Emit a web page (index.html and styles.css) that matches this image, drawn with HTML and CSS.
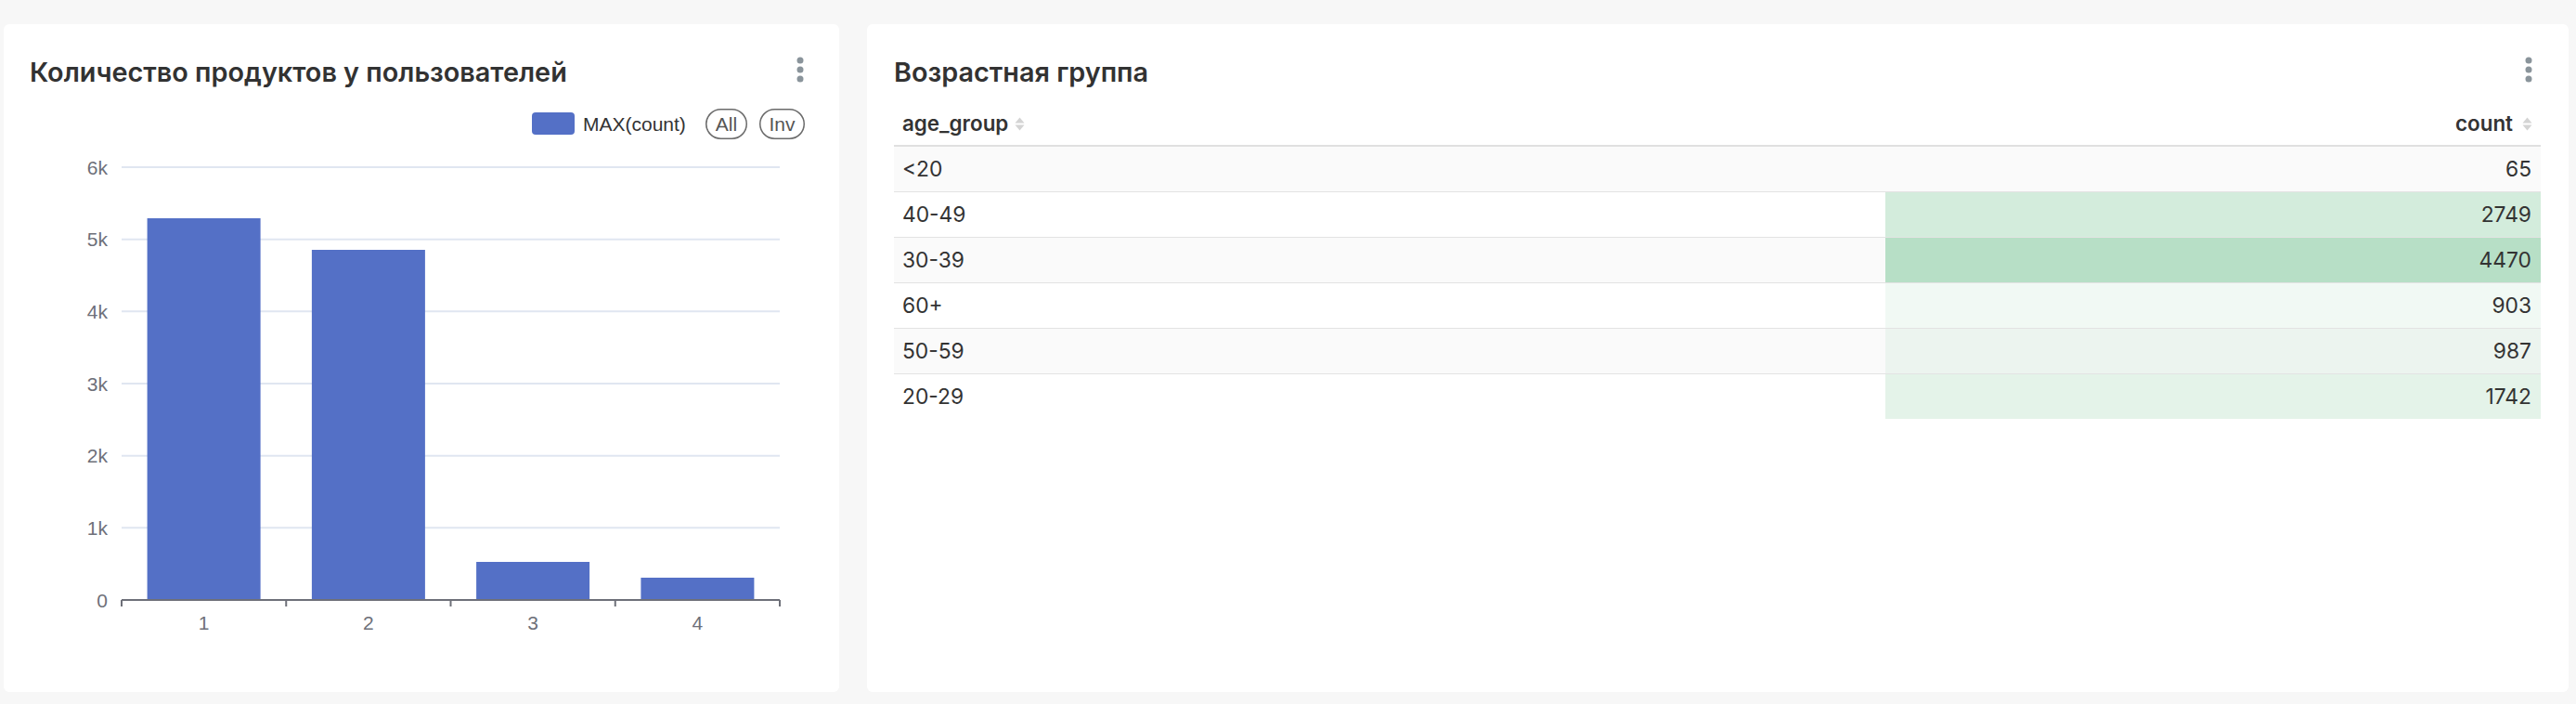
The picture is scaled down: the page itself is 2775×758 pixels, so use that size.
FILE: index.html
```html
<!DOCTYPE html>
<html lang="ru">
<head>
<meta charset="utf-8">
<title>Dashboard</title>
<link rel="stylesheet" href="styles.css">
</head>
<body>
<div class="dashboard">
  <section class="card card-chart">
    <header class="card-header">
      <h2 class="card-title">Количество продуктов у пользователей</h2>
      <svg class="kebab" width="28" height="36" viewBox="0 0 28 36"><circle cx="14" cy="6" r="3.5"/><circle cx="14" cy="16" r="3.5"/><circle cx="14" cy="26" r="3.5"/></svg>
    </header>
    <svg class="chart" width="900" height="649" viewBox="4 96 900 649">
      <g class="legend">
        <rect x="573" y="121" width="46" height="24" rx="4" fill="#5470c6"/>
        <text x="628" y="140.5" class="legend-text">MAX(count)</text>
        <rect x="760.75" y="117.75" width="43.5" height="31.5" rx="15.75" class="pill"/>
        <text x="782.5" y="140.5" class="pill-text" text-anchor="middle">All</text>
        <rect x="818.75" y="117.75" width="47.5" height="31.5" rx="15.75" class="pill"/>
        <text x="842.5" y="140.5" class="pill-text" text-anchor="middle">Inv</text>
      </g>
      <g class="grid">
        <line x1="131" x2="840" y1="180" y2="180"/>
        <line x1="131" x2="840" y1="257.7" y2="257.7"/>
        <line x1="131" x2="840" y1="335.3" y2="335.3"/>
        <line x1="131" x2="840" y1="413" y2="413"/>
        <line x1="131" x2="840" y1="490.7" y2="490.7"/>
        <line x1="131" x2="840" y1="568.3" y2="568.3"/>
      </g>
      <g class="ylabels" text-anchor="end">
        <text x="116" y="187.5">6k</text>
        <text x="116" y="265.2">5k</text>
        <text x="116" y="342.8">4k</text>
        <text x="116" y="420.5">3k</text>
        <text x="116" y="498.2">2k</text>
        <text x="116" y="575.8">1k</text>
        <text x="116" y="653.5">0</text>
      </g>
      <g class="bars" fill="#5470c6">
        <rect x="158.6" y="235" width="122" height="411"/>
        <rect x="335.9" y="269" width="122" height="377"/>
        <rect x="513.1" y="605" width="122" height="41"/>
        <rect x="690.4" y="622" width="122" height="24"/>
      </g>
      <g class="axis">
        <line x1="131" x2="840" y1="646" y2="646"/>
        <line x1="131" x2="131" y1="646" y2="653"/>
        <line x1="308.25" x2="308.25" y1="646" y2="653"/>
        <line x1="485.5" x2="485.5" y1="646" y2="653"/>
        <line x1="662.75" x2="662.75" y1="646" y2="653"/>
        <line x1="840" x2="840" y1="646" y2="653"/>
      </g>
      <g class="xlabels" text-anchor="middle">
        <text x="219.6" y="678">1</text>
        <text x="396.9" y="678">2</text>
        <text x="574.1" y="678">3</text>
        <text x="751.4" y="678">4</text>
      </g>
    </svg>
  </section>

  <section class="card card-table">
    <header class="card-header">
      <h2 class="card-title">Возрастная группа</h2>
      <svg class="kebab" width="28" height="36" viewBox="0 0 28 36"><circle cx="14" cy="6" r="3.5"/><circle cx="14" cy="16" r="3.5"/><circle cx="14" cy="26" r="3.5"/></svg>
    </header>
    <div class="table-wrap">
      <table class="data-table">
        <thead>
          <tr>
            <th class="col-group"><span class="th-inner">age_group<svg class="sort" width="11" height="17" viewBox="0 0 11 17"><path d="M0.5 7.5 L5.5 1.5 L10.5 7.5 Z"/><path d="M0.5 9.5 L5.5 15.5 L10.5 9.5 Z"/></svg></span></th>
            <th class="col-count"><span class="th-inner">count<svg class="sort" width="11" height="17" viewBox="0 0 11 17"><path d="M0.5 7.5 L5.5 1.5 L10.5 7.5 Z"/><path d="M0.5 9.5 L5.5 15.5 L10.5 9.5 Z"/></svg></span></th>
          </tr>
        </thead>
        <tbody>
          <tr><td>&lt;20</td><td class="num" style="background-color: rgba(183,223,198,0)">65</td></tr>
          <tr><td>40-49</td><td class="num" style="background-color: rgba(183,223,198,0.609)">2749</td></tr>
          <tr><td>30-39</td><td class="num" style="background-color: rgba(183,223,198,1)">4470</td></tr>
          <tr><td>60+</td><td class="num" style="background-color: rgba(183,223,198,0.19)">903</td></tr>
          <tr><td>50-59</td><td class="num" style="background-color: rgba(183,223,198,0.209)">987</td></tr>
          <tr><td>20-29</td><td class="num" style="background-color: rgba(183,223,198,0.381)">1742</td></tr>
        </tbody>
      </table>
    </div>
  </section>
</div>
</body>
</html>
```

FILE: styles.css
```css
html, body {
  margin: 0;
  padding: 0;
  background: #f7f7f7;
}

body {
  font-family: Inter, "Noto Sans", "Liberation Sans", sans-serif;
  color: #333333;
}

.dashboard {
  display: flex;
  gap: 30px;
  padding: 26px 8px 13px 4px;
  height: 758px;
  box-sizing: border-box;
}

.card {
  background: #ffffff;
  border-radius: 6px;
  overflow: hidden;
  display: flex;
  flex-direction: column;
}

.card-chart {
  flex: 0 0 900px;
}

.card-table {
  flex: 1 1 auto;
}

.card-header {
  display: flex;
  align-items: flex-start;
  justify-content: space-between;
  padding: 34px 28px 0 28px;
  height: 36px;
}

.card-table .card-header {
  padding-left: 29px;
  padding-right: 29px;
}

.card-title {
  margin: 0;
  font-size: 28.8px;
  line-height: 36px;
  font-weight: 600;
  color: #323232;
  white-space: nowrap;
}

.kebab {
  display: block;
  fill: #8a949b;
  margin-top: -1px;
}

.chart {
  display: block;
}

.chart text {
  font-family: "Liberation Sans", Arial, sans-serif;
  font-size: 21px;
}

.legend-text {
  fill: #333333;
}

.pill {
  fill: none;
  stroke: #6a6a6a;
  stroke-width: 1.5;
}

.pill-text {
  fill: #555555;
}

.grid line {
  stroke: #e0e6f1;
  stroke-width: 2;
}

.ylabels text,
.xlabels text {
  fill: #6e7079;
}

.axis line {
  stroke: #6e7079;
  stroke-width: 2;
}

.table-wrap {
  padding: 0 30px 0 29px;
}

.data-table {
  width: 100%;
  border-collapse: collapse;
  table-layout: fixed;
  font-size: 22.8px;
  color: #333333;
}

.data-table th {
  box-sizing: border-box;
  height: 61px;
  padding: 0 9px 8px 9px;
  vertical-align: bottom;
  line-height: 30px;
  font-size: 22.4px;
  font-weight: 600;
  border-bottom: 2px solid #e0e0e0;
  white-space: nowrap;
}

.data-table th.col-group {
  width: 60.2%;
  text-align: left;
}

.data-table th.col-count {
  text-align: right;
}

.th-inner {
  display: inline-flex;
  align-items: center;
  gap: 7px;
}

.col-count .th-inner {
  gap: 10px;
}

.sort {
  display: block;
  fill: #d4d4d4;
}

.data-table td {
  box-sizing: border-box;
  height: 49px;
  padding: 0 10px 0 9px;
  border-bottom: 1px solid #e3e3e3;
  line-height: 30px;
  vertical-align: middle;
}

.data-table tbody tr:last-child td {
  border-bottom: none;
}

.data-table tbody tr:nth-child(odd) {
  background: #fafafa;
}

.data-table td.num {
  text-align: right;
}
```
